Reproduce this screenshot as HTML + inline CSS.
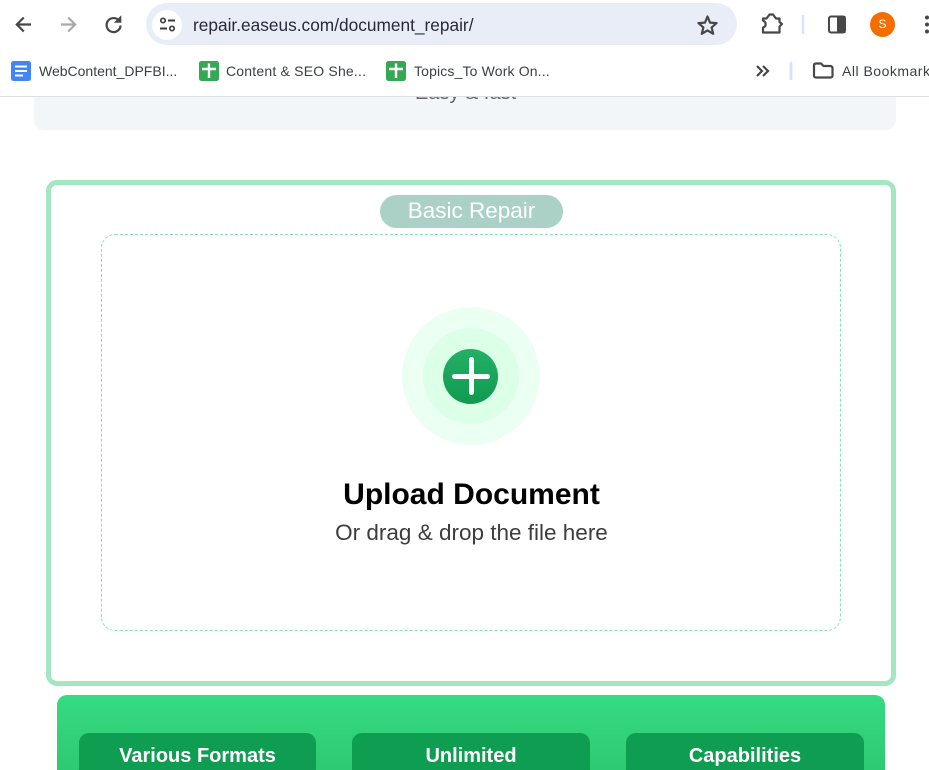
<!DOCTYPE html>
<html lang="en"><head><meta charset="utf-8"><title>EaseUS Document Repair</title>
<style>
html,body{margin:0;padding:0;background:#fff;overflow:hidden;}
#p{width:929px;height:770px;position:relative;overflow:hidden;font-family:"Liberation Sans",sans-serif;background:#fff;}
.a{position:absolute;box-sizing:border-box;}
.t{position:absolute;white-space:nowrap;line-height:1;}
svg{position:absolute;overflow:visible;}
.bm{font-size:14px;color:#3c4043;top:64px;}
.btn{position:absolute;top:733px;height:60px;background:#0f9d52;border-radius:10px;color:#fff;font-weight:bold;font-size:20px;text-align:center;line-height:47px;}
</style></head><body><div id="p">

<!-- page -->
<div class="a" style="left:34px;top:60px;width:862px;height:70px;background:#f3f6f8;border-radius:10px;"></div>
<div class="t" style="left:415px;top:83px;font-size:20px;color:#666;">Easy &amp; fast</div>

<!-- toolbar -->
<div class="a" style="left:0;top:0;width:929px;height:97px;background:#fff;border-bottom:1px solid #dcdedf;"></div>
<div class="a" style="left:146px;top:3px;width:591px;height:42px;background:#e9edf7;border-radius:21px;"></div>
<div class="a" style="left:152px;top:10px;width:30px;height:30px;background:#fff;border-radius:50%;"></div>

<svg style="left:0;top:0" width="929" height="97" fill="none">
 <!-- back -->
 <path d="M31 24.5H17.5M23.8 17.5L16.8 24.5L23.800 31.500" stroke="#474747" stroke-width="2.2"/>
 <!-- forward -->
 <path d="M61 24.5H74.5M68.2 17.5L75.2 24.5L68.2 31.5" stroke="#a9a9a9" stroke-width="2.2"/>
 <!-- reload -->
 <path d="M119.3 21A7 7 0 1 0 120.6 25.5" stroke="#474747" stroke-width="2.2"/>
 <path d="M114.5 22.5H121V16Z" fill="#474747" stroke="#474747" stroke-width=".6"/>
 <!-- site settings -->
 <circle cx="163" cy="20.5" r="2.2" stroke="#3c3c3c" stroke-width="1.7"/>
 <path d="M168 20.5H175M160 28.5H167" stroke="#3c3c3c" stroke-width="2"/>
 <circle cx="172" cy="28.5" r="2.2" stroke="#3c3c3c" stroke-width="1.7"/>
 <!-- star -->
 <path d="M707.5 16.5L710 22.6L716.6 23.1L711.6 27.4L713.2 33.8L707.5 30.4L701.8 33.8L703.4 27.4L698.4 23.1L705 22.6Z" stroke="#474747" stroke-width="2.2" stroke-linejoin="round"/>
 <!-- extensions -->
 <path d="M763 32.500V27.500C766.500 26.500 766.500 22 763 20.500V18.500H766.500L769.500 14.500H773L776 18.500H779.500V22L782 24L779.500 26.500V32.500Z" stroke="#474747" stroke-width="2.2" stroke-linejoin="round"/>
 <path d="M803 15V34" stroke="#d3e3fd" stroke-width="2.4"/>
 <!-- side panel -->
 <rect x="829" y="16.5" width="16" height="16" rx="2" stroke="#474747" stroke-width="2"/>
 <rect x="837" y="16" width="8.5" height="17" fill="#474747"/>
 <!-- menu dots -->
 <circle cx="927" cy="17.5" r="2" fill="#474747"/><circle cx="927" cy="24.5" r="2" fill="#474747"/><circle cx="927" cy="31.5" r="2" fill="#474747"/>
 <!-- docs icon -->
 <rect x="11" y="61" width="20" height="20" rx="2.5" fill="#4285f4"/>
 <path d="M15 66.5H27M15 71H27M15 75.5H23" stroke="#fff" stroke-width="1.900"/>
 <!-- sheets icons -->
 <rect x="199" y="61" width="20" height="20" rx="2.500" fill="#34a853"/>
 <path d="M202 69H216M209 63.500V78" stroke="#fff" stroke-width="2.400"/>
 <rect x="386" y="61" width="20" height="20" rx="2.500" fill="#34a853"/>
 <path d="M389 69H403M396 63.500V78" stroke="#fff" stroke-width="2.400"/>
 <!-- chevrons -->
 <path d="M757 66L762 71L757 76M763 66L768 71L763 76" stroke="#474747" stroke-width="2.200"/>
 <path d="M791 62V80" stroke="#d3e3fd" stroke-width="2.800"/>
 <!-- folder -->
 <path d="M814 65.500C814 64 815 63.500 816 63.500H821L823.500 66H830.500C831.500 66 832.500 67 832.500 68V76C832.500 77 831.500 77.500 830.500 77.500H816C815 77.500 814 77 814 76Z" stroke="#474747" stroke-width="2.200"/>
</svg>

<div class="a" style="left:870px;top:12px;width:25px;height:25px;border-radius:50%;background:#f46d01;color:#fff;font-size:12px;text-align:center;line-height:25px;">S</div>

<div class="t" style="left:193px;top:17px;font-size:17.300px;color:#282a3a;">repair.easeus.com/document_repair/</div>
<div class="t bm" style="left:39px;">WebContent_DPFBI...</div>
<div class="t bm" style="left:226px;letter-spacing:.2px;">Content &amp; SEO She...</div>
<div class="t bm" style="left:414px;letter-spacing:.15px;">Topics_To Work On...</div>
<div class="t bm" style="left:842px;letter-spacing:.5px;">All Bookmarks</div>

<!-- upload card -->
<div class="a" style="left:46px;top:180px;width:850px;height:506px;border:5px solid #a3e6c2;border-radius:11px;background:#fff;"></div>
<div class="a" style="left:101px;top:234px;width:740px;height:397px;border:1px dashed #86e2b3;border-radius:14px;"></div>
<div class="a" style="left:380px;top:195px;width:183px;height:33px;background:#abd1c6;border-radius:17px;color:#fff;font-size:22.500px;text-align:center;line-height:31px;">Basic Repair</div>

<div class="a" style="left:402px;top:307px;width:138px;height:138px;border-radius:50%;background:#ecfff3;"></div>
<div class="a" style="left:423px;top:328px;width:96px;height:96px;border-radius:50%;background:#dcffe8;"></div>
<div class="a" style="left:443px;top:349px;width:55px;height:55px;border-radius:50%;background:linear-gradient(#24b066,#0f9a50);"></div>
<div class="a" style="left:452px;top:374px;width:38px;height:4.500px;border-radius:2.500px;background:#fff;"></div>
<div class="a" style="left:469px;top:357px;width:4.500px;height:38px;border-radius:2.500px;background:#fff;"></div>

<div class="t" style="left:0;width:943px;text-align:center;top:480px;font-size:30px;font-weight:bold;color:#000;">Upload Document</div>
<div class="t" style="left:0;width:943px;text-align:center;top:522px;font-size:22.500px;color:#3d3d3d;">Or drag &amp; drop the file here</div>

<!-- green panel -->
<div class="a" style="left:57px;top:695px;width:828px;height:75px;border-radius:10px 10px 0 0;background:linear-gradient(#35db82,#2ec973);"></div>
<div class="btn" style="left:79px;width:237px;">Various Formats</div>
<div class="btn" style="left:352px;width:238px;">Unlimited</div>
<div class="btn" style="left:626px;width:238px;">Capabilities</div>

</div></body></html>
